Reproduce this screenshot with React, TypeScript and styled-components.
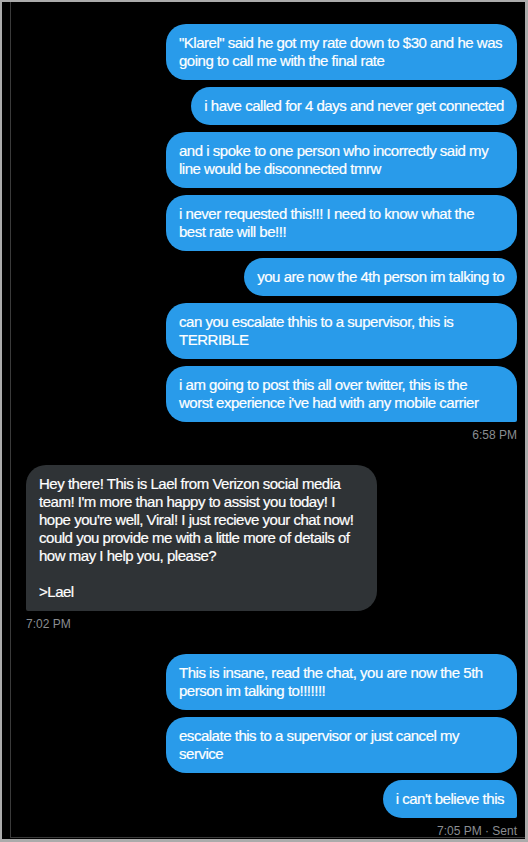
import styled, { createGlobalStyle } from "styled-components";

type Side = "sent" | "received";

type Group = {
  side: Side;
  messages: string[];
  stamp: string;
};

const conversation: Group[] = [
  {
    side: "sent",
    messages: [
      '"Klarel" said he got my rate down to $30 and he was going to call me with the final rate',
      "i have called for 4 days and never get connected",
      "and i spoke to one person who incorrectly said my line would be disconnected tmrw",
      "i never requested this!!! I need to know what the best rate will be!!!",
      "you are now the 4th person im talking to",
      "can you escalate thhis to a supervisor, this is TERRIBLE",
      "i am going to post this all over twitter, this is the worst experience i've had with any mobile carrier",
    ],
    stamp: "6:58 PM",
  },
  {
    side: "received",
    messages: [
      "Hey there! This is Lael from Verizon social media team! I'm more than happy to assist you today! I hope you're well, Viral! I just recieve your chat now! could you provide me with a little more of details of how may I help you, please?\n\n>Lael",
    ],
    stamp: "7:02 PM",
  },
  {
    side: "sent",
    messages: [
      "This is insane, read the chat, you are now the 5th person im talking to!!!!!!!",
      "escalate this to a supervisor or just cancel my service",
      "i can't believe this",
    ],
    stamp: "7:05 PM · Sent",
  },
];

const GlobalStyle = createGlobalStyle`
  html, body {
    margin: 0;
    padding: 0;
    background: #ababab;
  }
  body {
    font-family: "Liberation Sans", Arial, sans-serif;
    -webkit-font-smoothing: antialiased;
  }
  * {
    box-sizing: border-box;
  }
`;

const Frame = styled.div`
  width: 528px;
  height: 842px;
  padding: 2px 3px 3px 2px;
  background: #ababab;
`;

const Window = styled.div`
  height: 100%;
  display: flex;
  background: #000;
  padding-left: 8px;
  padding-bottom: 1px;
`;

const Pane = styled.div`
  flex: 1;
  min-width: 0;
  overflow: hidden;
  border-left: 1px solid #3a3a3a;
  border-bottom: 1px solid #3a3a3a;
  padding: 22px 8px 0 15px;
  display: flex;
  flex-direction: column;
  gap: 21px;
`;

const Thread = styled.div<{ $side: Side }>`
  display: flex;
  flex-direction: column;
  align-items: ${(p) => (p.$side === "sent" ? "flex-end" : "flex-start")};
  gap: 7px;
`;

const Bubble = styled.div<{ $side: Side; $last: boolean }>`
  max-width: 351px;
  padding: 10px 13px;
  border-radius: 20px;
  ${(p) =>
    p.$last &&
    (p.$side === "sent" ? "border-bottom-right-radius: 2px;" : "border-bottom-left-radius: 2px;")}
  background: ${(p) => (p.$side === "sent" ? "#299bea" : "#2f3336")};
  color: #fff;
  font-size: 15px;
  line-height: 18px;
  letter-spacing: -0.48px;
  -webkit-text-stroke: 0.2px #fff;
  white-space: pre-wrap;
`;

const Stamp = styled.div`
  margin-top: -2px;
  font-size: 12px;
  line-height: 17px;
  color: #8a8d91;
`;

export default function App() {
  return (
    <>
      <GlobalStyle />
      <Frame>
        <Window>
          <Pane>
            {conversation.map((group, gi) => (
              <Thread key={gi} $side={group.side}>
                {group.messages.map((text, i) => (
                  <Bubble
                    key={i}
                    $side={group.side}
                    $last={i === group.messages.length - 1}
                  >
                    {text}
                  </Bubble>
                ))}
                <Stamp>{group.stamp}</Stamp>
              </Thread>
            ))}
          </Pane>
        </Window>
      </Frame>
    </>
  );
}
